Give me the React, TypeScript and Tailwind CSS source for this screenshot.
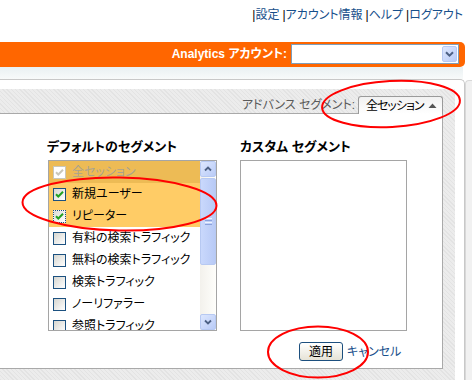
import React from "react";

function Check({ color }: { color: string }) {
  return (
    <svg width="11" height="11" viewBox="0 0 11 11" className="block">
      <path d="M2 5.2 L4.3 7.5 L9 2.8" fill="none" stroke={color} strokeWidth="2" />
    </svg>
  );
}

function Box({ checked, disabled, focus }: { checked?: boolean; disabled?: boolean; focus?: boolean }) {
  const cls = disabled
    ? "border-[#c9c7ba] bg-white"
    : focus
    ? "border-dotted border-[#1c5180] bg-gradient-to-br from-[#dcdcd7] to-white"
    : "border-[#1c5180] bg-gradient-to-br from-[#d6d6d0] to-white";
  return (
    <span className={`w-[13px] h-[13px] shrink-0 border flex items-center justify-center ${cls}`}>
      {checked ? <Check color={disabled ? "#c9c7ba" : "#21a121"} /> : null}
    </span>
  );
}

function ScrollBtn({ up }: { up?: boolean }) {
  return (
    <div className="h-[16px] w-[16px] rounded-[2px] border border-[#b7c9f2] bg-gradient-to-br from-[#dde7fe] to-[#b9cbf7] flex items-center justify-center">
      <svg width="8" height="6" viewBox="0 0 8 6" className="block">
        <path d={up ? "M1 4.5 L4 1.5 L7 4.5" : "M1 1.5 L4 4.5 L7 1.5"} fill="none" stroke="#4d6185" strokeWidth="1.8" />
      </svg>
    </div>
  );
}

const rows = [
  { t: "全セッション", checked: true, disabled: true, bg: "bg-[#edbb55]" },
  { t: "新規ユーザー", checked: true, bg: "bg-[#ffcc66]" },
  { t: "リピーター", checked: true, focus: true, bg: "bg-[#ffcc66]" },
  { t: "有料の検索トラフィック", bg: "bg-white" },
  { t: "無料の検索トラフィック", bg: "bg-white" },
  { t: "検索トラフィック", bg: "bg-white" },
  { t: "ノーリファラー", bg: "bg-white" },
  { t: "参照トラフィック", bg: "bg-white" },
];

export default function App() {
  return (
    <div className="relative w-[472px] h-[380px] overflow-hidden bg-white text-[12px] text-black font-['Liberation_Sans','Noto_Sans_CJK_JP',sans-serif] [font-feature-settings:'palt']">
      {/* top links */}
      <div className="h-[42px] flex justify-end items-start pt-[7px] pr-[9px] leading-[16px]">
        <span>|</span>
        <span className="text-[#174f8b] mr-[3px]">設定</span>
        <span>|</span>
        <span className="text-[#174f8b] mr-[3px]">アカウント情報</span>
        <span>|</span>
        <span className="text-[#174f8b] mr-[3px]">ヘルプ</span>
        <span>|</span>
        <span className="text-[#174f8b]">ログアウト</span>
      </div>

      {/* orange bar */}
      <div className="h-[25px] mr-[7px] bg-[#ff6600] rounded-r-[5px] flex items-start justify-end pt-[2px] pr-[6px]">
        <span className="text-white font-bold leading-[20px] mr-[4px]">Analytics アカウント:</span>
        <div className="w-[168px] h-[20px] border border-[#7f9db9] bg-white flex justify-end items-center pr-[1px]">
          <div className="w-[15px] h-[16px] rounded-[2px] border border-[#b7c9f2] bg-gradient-to-br from-[#dde7fe] to-[#b9cbf7] flex items-center justify-center">
            <svg width="9" height="6" viewBox="0 0 9 6" className="block">
              <path d="M1 1.2 L4.5 4.6 L8 1.2" fill="none" stroke="#4d6185" strokeWidth="2" />
            </svg>
          </div>
        </div>
      </div>

      {/* band */}
      <div className="h-[12px] mr-[9px] bg-gradient-to-b from-[#e9f0f2] to-[#f8fafa]" />

      {/* frame */}
      <div className="flex h-[301px]">
        <div className="w-[465px] shrink-0 border-t border-r border-[#c8c8c8] rounded-tr-[5px] pt-[9px] pr-[9px] flex flex-col">
          <div className="flex-1 flex flex-col pt-[7px] pr-[12px] bg-[#e8e8e8] bg-[repeating-linear-gradient(45deg,#e3e3e3_0px,#e3e3e3_1px,#ececec_1px,#ececec_3px)]">
            {/* tab row */}
            <div className="h-[17px] flex justify-end items-start">
              <span className="text-[#5a5a5a] leading-[17px] mt-[1px] mr-[3px] whitespace-nowrap">アドバンス セグメント:</span>
              <div className="relative z-10 w-[85px] shrink-0 h-[18px] mb-[-1px] border-l border-t border-r border-[#9a9a9a] rounded-t-[3px] bg-gradient-to-b from-[#f1f1f1] to-white flex items-center justify-between pl-[7px] pr-[5px]">
                <span className="leading-[16px] whitespace-nowrap tracking-[-1px]">全セッション</span>
                <svg width="9" height="5" viewBox="0 0 9 5" className="block shrink-0">
                  <path d="M0.5 5 L4.5 0.5 L8.5 5 Z" fill="#555" />
                </svg>
              </div>
            </div>
            {/* panel */}
            <div className="h-[256px] bg-white border-t border-r border-b border-[#a9a9a9] flex pt-[25px] pl-[48px]">
              {/* left column */}
              <div className="w-[169px] flex flex-col">
                <div className="h-[16px] leading-[16px] text-[13px] font-bold ml-[-1px] mb-[5px] whitespace-nowrap">デフォルトのセグメント</div>
                <div className="h-[171px] border border-[#a5a5a5] flex overflow-hidden">
                  <div className="flex-1 flex flex-col overflow-hidden">
                    {rows.map((r) => (
                      <div key={r.t} className={`h-[22px] shrink-0 flex items-center pl-[4px] gap-[6px] whitespace-nowrap ${r.bg}`}>
                        <Box checked={r.checked} disabled={r.disabled} focus={r.focus} />
                        <span className={r.disabled ? "text-[#aaa38e]" : "text-black"}>{r.t}</span>
                      </div>
                    ))}
                  </div>
                  <div className="w-[16px] shrink-0 flex flex-col bg-gradient-to-r from-[#f3f1ec] to-[#fefefb]">
                    <ScrollBtn up />
                    <div className="mt-[1px] h-[87px] rounded-[2px] border border-[#b7c9f2] bg-gradient-to-r from-[#c9d8fc] to-[#b8caf6] flex flex-col items-center justify-center gap-[1px]">
                      <div className="w-[7px] h-[1px] bg-[#eef3fe]" />
                      <div className="w-[7px] h-[1px] bg-[#8aa2dc]" />
                      <div className="w-[7px] h-[1px] bg-[#eef3fe]" />
                      <div className="w-[7px] h-[1px] bg-[#8aa2dc]" />
                    </div>
                    <div className="flex-1" />
                    <ScrollBtn />
                  </div>
                </div>
              </div>
              {/* right column */}
              <div className="w-[167px] ml-[23px] flex flex-col">
                <div className="h-[16px] leading-[16px] text-[13px] font-bold mb-[5px] whitespace-nowrap">カスタム セグメント</div>
                <div className="h-[171px] border border-[#a5a5a5] bg-white" />
                <div className="mt-[11px] pl-[59px] flex items-center gap-[4px]">
                  <button className="w-[44px] h-[19px] border border-[#1c4f7e] rounded-[3px] bg-gradient-to-b from-white to-[#e6e3d6] text-[12px] leading-none flex items-center justify-center">適用</button>
                  <span className="text-[#174f8b] leading-[16px] whitespace-nowrap">キャンセル</span>
                </div>
              </div>
            </div>
          </div>
        </div>
        <div className="flex-1 mt-[1px] bg-[#f1f1f1] border-l border-t border-[#d8d8d8] rounded-tl-[4px]" />
      </div>

      {/* red annotation ellipses */}
      <svg className="absolute inset-0 pointer-events-none" width="472" height="380" viewBox="0 0 472 380">
        <ellipse cx="391" cy="104" rx="69" ry="23" fill="none" stroke="#ff0000" strokeWidth="2" transform="rotate(-3 391 104)" />
        <ellipse cx="119.5" cy="204" rx="97" ry="26.5" fill="none" stroke="#ff0000" strokeWidth="2" transform="rotate(1 119.5 204)" />
        <ellipse cx="318" cy="352" rx="50" ry="25.5" fill="none" stroke="#ff0000" strokeWidth="2" />
      </svg>
    </div>
  );
}
